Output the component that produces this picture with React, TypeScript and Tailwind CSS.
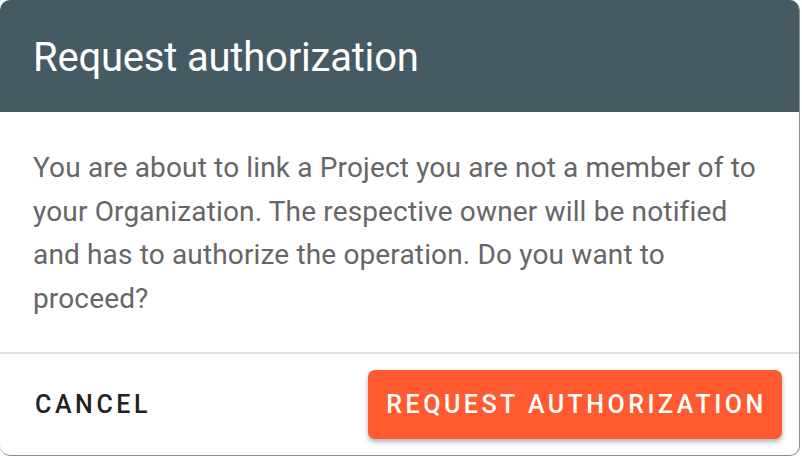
import React from "react";

export default function App() {
  return (
    <div className="w-[802px] h-[456px] bg-white overflow-hidden" style={{ fontFamily: "Roboto, 'Liberation Sans', sans-serif" }}>
      <div className="w-[800px] h-[456px] rounded-[10px] overflow-hidden border-r border-b border-[#8d8d8d] flex flex-col bg-white">
        <div className="h-[112px] bg-[#465a64] flex items-center pl-[33px] shrink-0">
          <h1 className="text-[40px] leading-none text-white font-normal tracking-[-0.2px] pt-[4px]">Request authorization</h1>
        </div>
        <div className="pl-[33px] pr-[35px] pt-[34px] h-[240px] shrink-0">
          <p className="text-[28px] leading-[43.5px] text-[#666666] tracking-[0.15px]">
            You are about to link a Project you are not a member of to your Organization. The respective owner will be notified and has to authorize the operation. Do you want to proceed?
          </p>
        </div>
        <div className="h-[2px] bg-[#e0e0e0] shrink-0" />
        <div className="flex-1 flex items-center justify-between pl-[35px] pr-[17px]">
          <button className="text-[25px] font-medium tracking-[3.6px] text-[#222222] leading-none">CANCEL</button>
          <button className="w-[414px] h-[69px] rounded-[7px] bg-[#ff5a30] text-white text-[25px] font-medium tracking-[3.5px] leading-none pl-[3px] shadow-[0_3px_5px_rgba(0,0,0,0.3)]">REQUEST AUTHORIZATION</button>
        </div>
      </div>
    </div>
  );
}
